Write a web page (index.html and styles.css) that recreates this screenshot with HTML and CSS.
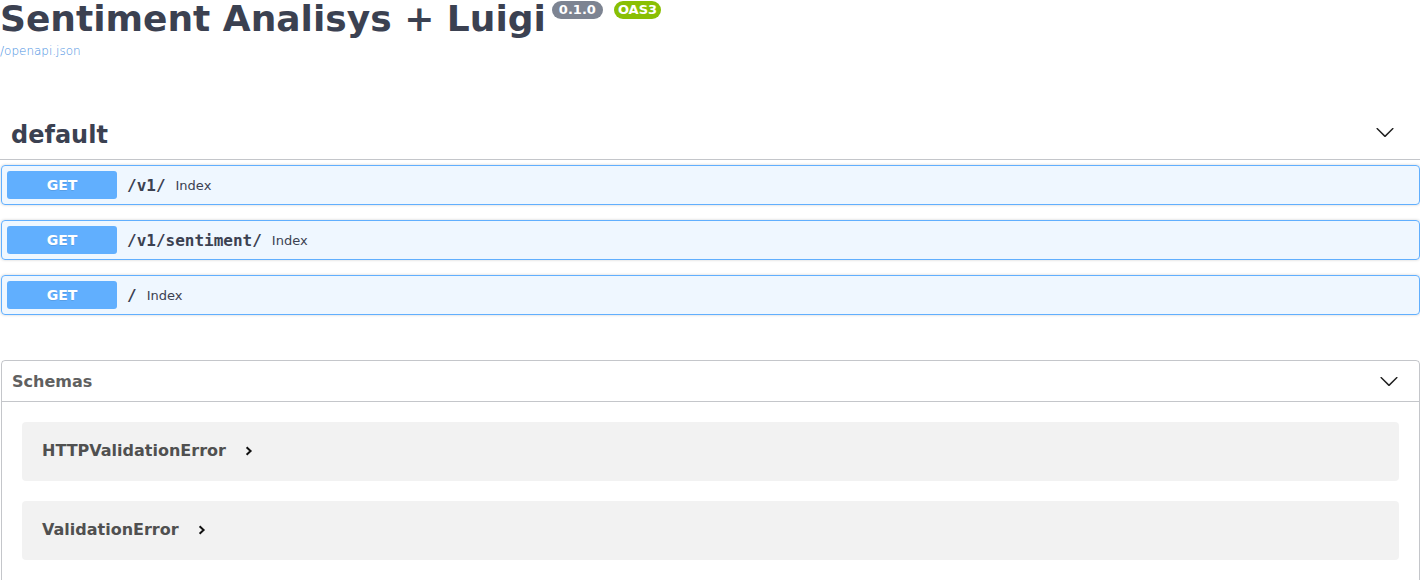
FILE: index.html
```html
<!DOCTYPE html>
<html lang="en">
<head>
<meta charset="utf-8">
<title>Sentiment Analisys + Luigi - Swagger UI</title>
<link rel="stylesheet" href="styles.css">
</head>
<body>
<div class="page">
  <div class="info">
    <h2 class="title">
      <span class="title-text">Sentiment Analisys + Luigi</span>
      <span class="badge badge-version">0.1.0</span>
      <span class="badge badge-oas">OAS3</span>
    </h2>
    <a class="spec-link" href="#">/openapi.json</a>
  </div>

  <section class="tag-section">
    <h3 class="tag-heading">
      <span>default</span>
      <svg class="arrow" width="20" height="20" viewBox="0 0 20 20"><path d="M17.418 6.109c.272-.268.709-.268.979 0s.271.701 0 .969l-7.908 7.83c-.27.268-.707.268-.979 0l-7.908-7.830c-.27-.268-.27-.701 0-.969.271-.268.709-.268.979 0L10 13.25l7.418-7.141z"/></svg>
    </h3>
    <div class="opblocks">
      <div class="opblock">
        <span class="method">GET</span>
        <span class="path">/v1/</span>
        <span class="summary">Index</span>
      </div>
      <div class="opblock">
        <span class="method">GET</span>
        <span class="path">/v1/sentiment/</span>
        <span class="summary">Index</span>
      </div>
      <div class="opblock">
        <span class="method">GET</span>
        <span class="path">/</span>
        <span class="summary">Index</span>
      </div>
    </div>
  </section>

  <section class="models">
    <h4 class="models-heading">
      <span>Schemas</span>
      <svg class="arrow" width="20" height="20" viewBox="0 0 20 20"><path d="M17.418 6.109c.272-.268.709-.268.979 0s.271.701 0 .969l-7.908 7.83c-.27.268-.707.268-.979 0l-7.908-7.83c-.27-.268-.27-.701 0-.969.271-.268.709-.268.979 0L10 13.25l7.418-7.141z"/></svg>
    </h4>
    <div class="model-list">
      <div class="model">
        <span class="model-title">HTTPValidationError</span>
        <svg class="model-toggle" width="8" height="10" viewBox="0 0 8 10"><path d="M1.6 1.2 L5.6 5 L1.6 8.8"/></svg>
      </div>
      <div class="model">
        <span class="model-title">ValidationError</span>
        <svg class="model-toggle" width="8" height="10" viewBox="0 0 8 10"><path d="M1.6 1.2 L5.6 5 L1.6 8.8"/></svg>
      </div>
    </div>
  </section>
</div>
</body>
</html>
```

FILE: styles.css
```css
html, body {
  margin: 0;
  padding: 0;
  background: #ffffff;
}

body {
  font-family: "DejaVu Sans", sans-serif;
  color: #3b4151;
}

.page {
  padding: 0 0 0 1px;
}

/* Info block */
.info {
  margin: 0 0 0 -1px;
}

.title {
  display: flex;
  align-items: flex-start;
  margin: 0;
  font-size: 36px;
  line-height: 38px;
  font-weight: 700;
  color: #3b4151;
}

.badge {
  margin-top: 1px;
  font-size: 13px;
  line-height: 14px;
  padding-top: 2px;
  padding-bottom: 2px;
  font-weight: 700;
  color: #ffffff;
  border-radius: 57px;
}

.badge-version {
  margin-left: 6px;
  padding-left: 7px;
  padding-right: 7px;
  background: #7d8492;
}

.badge-oas {
  margin-left: 11px;
  padding-left: 4px;
  padding-right: 4px;
  background: #89bf04;
}

.spec-link {
  display: block;
  margin-top: 6px;
  font-size: 12px;
  line-height: 14px;
  font-weight: 300;
  color: #4990e2;
  text-decoration: none;
}

/* Tag section */
.tag-section {
  margin-top: 53px;
}

.tag-heading {
  display: flex;
  align-items: flex-start;
  justify-content: space-between;
  margin: 0 0 5px -1px;
  padding: 10px 25px 10px 11px;
  font-size: 24px;
  line-height: 28px;
  font-weight: 700;
  color: #3b4151;
  border-bottom: 1px solid rgba(59, 65, 81, 0.3);
}

.tag-heading .arrow {
  margin-top: 1px;
}

.arrow {
  display: block;
  fill: #1f1f1f;
}

.opblocks {
  display: flex;
  flex-direction: column;
  gap: 15px;
}

.opblock {
  display: flex;
  align-items: center;
  padding: 5px;
  border: 1px solid #61affe;
  border-radius: 4px;
  background: rgba(97, 175, 254, 0.1);
  box-shadow: 0 0 3px rgba(0, 0, 0, 0.19);
}

.method {
  width: 110px;
  padding: 6px 0;
  font-size: 14px;
  line-height: 16px;
  font-weight: 700;
  text-align: center;
  color: #ffffff;
  background: #61affe;
  border-radius: 3px;
  text-shadow: 0 1px 0 rgba(0, 0, 0, 0.1);
}

.path {
  padding: 0 10px;
  font-family: "DejaVu Sans Mono", monospace;
  font-size: 16px;
  font-weight: 700;
  color: #3b4151;
}

.summary {
  font-size: 13px;
  color: #3b4151;
}

/* Models */
.models {
  margin-top: 45px;
  border: 1px solid rgba(59, 65, 81, 0.3);
  border-radius: 4px;
  padding-bottom: 30px;
}

.models-heading {
  display: flex;
  align-items: center;
  justify-content: space-between;
  margin: 0;
  padding: 10px 20px 10px 10px;
  font-size: 16px;
  font-weight: 700;
  color: #606060;
  border-bottom: 1px solid rgba(59, 65, 81, 0.3);
}

.model-list {
  display: flex;
  flex-direction: column;
  gap: 20px;
  padding: 20px 20px 0;
}

.model {
  display: flex;
  align-items: center;
  padding: 19px 20px 20px;
  line-height: 20px;
  border-radius: 4px;
  background: rgba(0, 0, 0, 0.05);
}

.model-title {
  font-size: 16px;
  font-weight: 700;
  color: #505050;
}

.model-toggle {
  display: block;
  margin-left: 19px;
  fill: none;
  stroke: #111111;
  stroke-width: 2;
}
```
